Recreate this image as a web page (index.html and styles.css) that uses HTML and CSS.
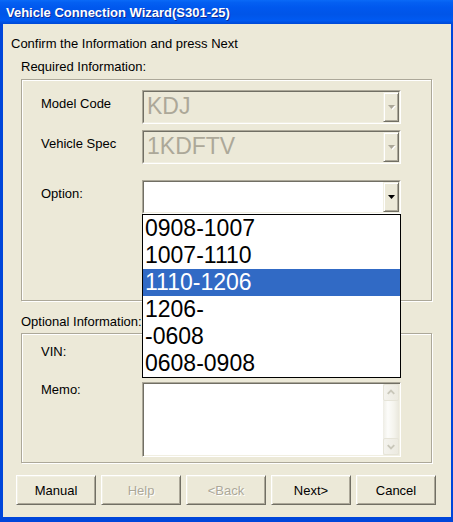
FILE: index.html
```html
<!DOCTYPE html>
<html>
<head>
<meta charset="utf-8">
<link rel="stylesheet" href="styles.css">
</head>
<body>
<div class="window">
  <div class="titlebar">Vehicle Connection Wizard(S301-25)</div>
  <div class="client">
    <div class="intro">Confirm the Information and press Next</div>
    <div class="group-caption first">Required Information:</div>
    <div class="groupbox required">
      <div class="row r1">
        <div class="row-label">Model Code</div>
        <div class="combo disabled">
          <div class="combo-inner">
            <span class="combo-text">KDJ</span>
            <span class="drop-btn"><svg width="8" height="5" viewBox="0 0 8 5"><path class="hl" d="M1 1h7L4.5 5z"/><path class="ar" d="M0 0h7L3.5 4z"/></svg></span>
          </div>
        </div>
      </div>
      <div class="row r2">
        <div class="row-label">Vehicle Spec</div>
        <div class="combo disabled">
          <div class="combo-inner">
            <span class="combo-text">1KDFTV</span>
            <span class="drop-btn"><svg width="8" height="5" viewBox="0 0 8 5"><path class="hl" d="M1 1h7L4.5 5z"/><path class="ar" d="M0 0h7L3.5 4z"/></svg></span>
          </div>
        </div>
      </div>
      <div class="row r3">
        <div class="row-label">Option:</div>
        <div class="combo">
          <div class="combo-inner">
            <span class="combo-text"></span>
            <span class="drop-btn"><svg width="8" height="5" viewBox="0 0 8 5"><path class="ar" d="M0 0h7L3.5 4z"/></svg></span>
          </div>
        </div>
      </div>
    </div>
    <div class="group-caption second">Optional Information:</div>
    <div class="groupbox optional">
      <div class="row vin-row">
        <div class="row-label">VIN:</div>
        <div class="textbox vin"></div>
      </div>
      <div class="row memo-row">
        <div class="row-label memo-label">Memo:</div>
        <div class="textbox memo">
          <div class="memo-area"></div>
          <div class="scrollbar">
            <div class="sb-btn"><svg width="15" height="15" viewBox="0 0 15 15"><polyline points="4,9 7.5,5.5 11,9" fill="none" stroke="#C9C7BA" stroke-width="2"/></svg></div>
            <div class="sb-track"></div>
            <div class="sb-btn"><svg width="15" height="15" viewBox="0 0 15 15"><polyline points="4,6 7.5,9.5 11,6" fill="none" stroke="#C9C7BA" stroke-width="2"/></svg></div>
          </div>
        </div>
      </div>
    </div>
    <div class="buttons">
      <div class="btn">Manual</div>
      <div class="btn off">Help</div>
      <div class="btn off">&lt;Back</div>
      <div class="btn">Next&gt;</div>
      <div class="btn">Cancel</div>
    </div>
  </div>
  <ul class="droplist">
    <li>0908-1007</li>
    <li>1007-1110</li>
    <li class="sel">1110-1206</li>
    <li>1206-</li>
    <li>-0608</li>
    <li>0608-0908</li>
  </ul>
</div>
</body>
</html>
```
FILE: styles.css
```css
html, body {
  margin: 0;
  padding: 0;
  background: #ECE9D8;
}

.window {
  position: relative;
  width: 453px;
  height: 522px;
  display: flex;
  flex-direction: column;
  font-family: "Liberation Sans", Arial, sans-serif;
  font-size: 13px;
  color: #000;
}

.titlebar {
  flex: none;
  height: 24px;
  box-sizing: border-box;
  padding: 2px 0 0 6px;
  line-height: 22px;
  font-weight: bold;
  font-size: 13px;
  color: #fff;
  text-shadow: 1px 1px 0 #0A2A9A;
  background: linear-gradient(180deg, #0A6AF8 0%, #0460F2 10%, #0058EE 30%, #0055E8 60%, #005AF2 85%, #0049D6 100%);
}

.client {
  flex: 1;
  background: #ECE9D8;
  border-style: solid;
  border-color: #0046DA;
  border-width: 0 2px 5px 3px;
}

.intro {
  margin: 12px 0 0 8px;
  line-height: 15px;
}

.group-caption {
  margin-left: 18px;
  line-height: 15px;
}
.group-caption.first { margin-top: 8px; }
.group-caption.second { margin-top: 13px; }

.groupbox {
  margin-left: 18px;
  width: 411px;
  box-sizing: border-box;
  border: 1px solid #ACA899;
  box-shadow: 1px 1px 0 #fff, inset 1px 1px 0 #fff;
}
.groupbox.required {
  margin-top: 5px;
  height: 222px;
  padding-top: 10px;
}
.groupbox.optional {
  margin-top: 4px;
  height: 130px;
  padding-top: 4px;
}

.row {
  display: flex;
  align-items: flex-start;
}
.row.r1, .row.r2 { margin-bottom: 6px; }
.row.r2 { margin-bottom: 16px; }
.row.vin-row { margin-bottom: 10px; }

.row-label {
  width: 101px;
  margin-left: 19px;
  padding-top: 6px;
  line-height: 15px;
}
.row-label.memo-label { padding-top: 0; }

.combo {
  width: 259px;
  height: 34px;
  box-sizing: border-box;
  border: 1px solid;
  border-color: #ACA899 #fff #fff #ACA899;
}
.combo-inner {
  height: 100%;
  box-sizing: border-box;
  border: 1px solid;
  border-color: #716F64 #F1EFE2 #F1EFE2 #716F64;
  display: flex;
  background: #fff;
}
.combo.disabled .combo-inner {
  background: #ECE9D8;
  color: #ACA899;
}
.combo-text {
  flex: 1;
  font-size: 23px;
  line-height: 28px;
  padding-left: 3px;
  white-space: nowrap;
}
.drop-btn {
  width: 16px;
  box-sizing: border-box;
  border: 1px solid;
  border-color: #F1EFE2 #716F64 #716F64 #F1EFE2;
  box-shadow: inset 1px 1px 0 #fff, inset -1px -1px 0 #ACA899;
  background: #ECE9D8;
  display: flex;
  align-items: center;
  justify-content: center;
}
.drop-btn svg { display: block; margin-left: 1px; }
.drop-btn .ar { fill: #000; }
.drop-btn .hl { fill: #fff; }
.combo.disabled .drop-btn .ar { fill: #ACA899; }

.textbox {
  width: 259px;
  box-sizing: border-box;
  border: 1px solid;
  border-color: #ACA899 #fff #fff #ACA899;
  box-shadow: inset 1px 1px 0 #716F64, inset -1px -1px 0 #F1EFE2;
  background: #fff;
}
.textbox.vin { height: 34px; }
.textbox.memo {
  height: 75px;
  padding: 1px;
  display: flex;
}
.memo-area { flex: 1; }

.scrollbar {
  width: 16px;
  display: flex;
  flex-direction: column;
  background: linear-gradient(90deg, #EEEDE5 0%, #FCFCFA 30%, #F4F3EC 70%, #E9E7DC 100%);
}
.sb-btn {
  height: 17px;
  box-sizing: border-box;
  border: 1px solid #E6E4D8;
  border-radius: 2px;
  background: linear-gradient(90deg, #F4F3EE, #ECEAE0);
  display: flex;
  align-items: center;
  justify-content: center;
}
.sb-btn svg { display: block; }
.sb-track { flex: 1; }

.buttons {
  display: flex;
  gap: 5px;
  margin: 12px 0 0 13px;
}
.btn {
  width: 80px;
  height: 30px;
  box-sizing: border-box;
  border: 1px solid;
  border-color: #fff #716F64 #716F64 #fff;
  box-shadow: inset 1px 1px 0 #F1EFE2, inset -1px -1px 0 #ACA899;
  background: #ECE9D8;
  display: flex;
  align-items: center;
  justify-content: center;
  line-height: 15px;
}
.btn.off {
  color: #ACA899;
  text-shadow: 1px 1px 0 #fff;
}

.droplist {
  position: absolute;
  left: 142px;
  top: 214px;
  width: 259px;
  margin: 0;
  padding: 0;
  list-style: none;
  box-sizing: border-box;
  border: 1px solid #000;
  background: #fff;
}
.droplist li {
  height: 27px;
  line-height: 27px;
  font-size: 23px;
  padding-left: 2px;
  white-space: nowrap;
}
.droplist li.sel {
  background: #316AC5;
  color: #fff;
}
```
